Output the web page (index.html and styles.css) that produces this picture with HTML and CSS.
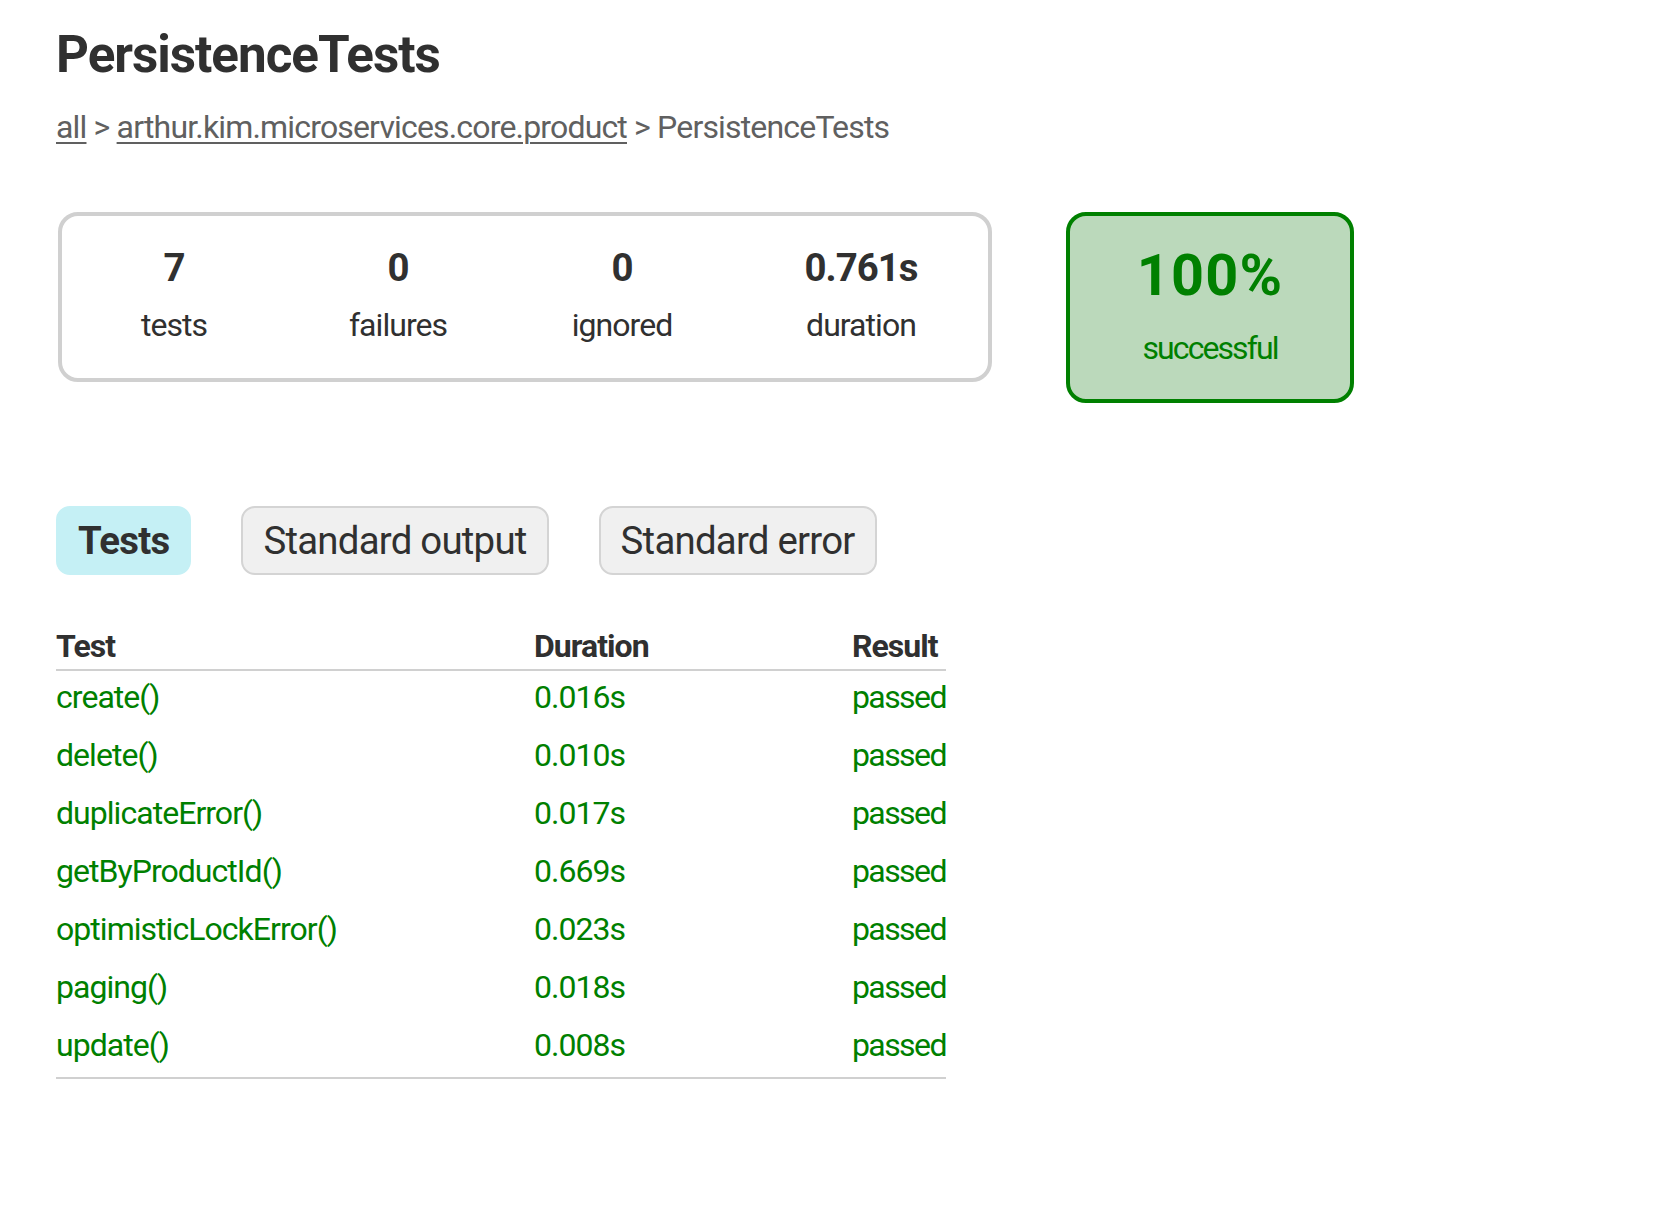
FILE: index.html
```html
<!DOCTYPE html>
<html lang="en">
<head>
<meta charset="utf-8">
<title>Test results - PersistenceTests</title>
<link rel="stylesheet" href="styles.css">
</head>
<body>
<div id="content">
  <h1>PersistenceTests</h1>
  <div class="breadcrumbs"><a href="#">all</a> &gt; <a href="#">arthur.kim.microservices.core.product</a> &gt; PersistenceTests</div>

  <div id="summary">
    <div class="summaryCell">
      <div class="summaryGroup">
        <div class="cell">
          <div class="infoBox">
            <div class="counter">7</div>
            <p>tests</p>
          </div>
        </div>
        <div class="cell">
          <div class="infoBox">
            <div class="counter">0</div>
            <p>failures</p>
          </div>
        </div>
        <div class="cell">
          <div class="infoBox">
            <div class="counter">0</div>
            <p>ignored</p>
          </div>
        </div>
        <div class="cell">
          <div class="infoBox duration">
            <div class="counter">0.761s</div>
            <p>duration</p>
          </div>
        </div>
      </div>
    </div>
    <div class="summaryCell">
      <div class="infoBox successRate">
        <div class="percent">100%</div>
        <p>successful</p>
      </div>
    </div>
  </div>

  <ul class="tabLinks">
    <li class="selected"><a href="#tab0">Tests</a></li>
    <li><a href="#tab1">Standard output</a></li>
    <li><a href="#tab2">Standard error</a></li>
  </ul>

  <table class="results">
    <thead>
      <tr>
        <th class="colTest">Test</th>
        <th class="colDuration">Duration</th>
        <th class="colResult">Result</th>
      </tr>
    </thead>
    <tbody>
      <tr><td class="success">create()</td><td class="success">0.016s</td><td class="success result">passed</td></tr>
      <tr><td class="success">delete()</td><td class="success">0.010s</td><td class="success result">passed</td></tr>
      <tr><td class="success">duplicateError()</td><td class="success">0.017s</td><td class="success result">passed</td></tr>
      <tr><td class="success">getByProductId()</td><td class="success">0.669s</td><td class="success result">passed</td></tr>
      <tr><td class="success">optimisticLockError()</td><td class="success">0.023s</td><td class="success result">passed</td></tr>
      <tr><td class="success">paging()</td><td class="success">0.018s</td><td class="success result">passed</td></tr>
      <tr><td class="success">update()</td><td class="success">0.008s</td><td class="success result">passed</td></tr>
    </tbody>
  </table>
</div>
</body>
</html>
```

FILE: styles.css
```css
html, body {
  margin: 0;
  padding: 0;
  background: #ffffff;
}

body {
  font-family: Roboto, "Noto Sans", "Liberation Sans", sans-serif;
  font-size: 32px;
  line-height: 38px;
  color: #303030;
  letter-spacing: -0.03em;
}

#content {
  padding: 25px 56px 60px 56px;
}

h1 {
  margin: 0 0 23px 0;
  font-size: 51.2px;
  line-height: 60px;
  font-weight: 700;
  letter-spacing: -0.02em;
  white-space: nowrap;
}

.breadcrumbs,
.breadcrumbs a {
  color: #606060;
}

.breadcrumbs {
  line-height: 38px;
  white-space: nowrap;
  letter-spacing: -0.026em;
}

.breadcrumbs a {
  text-decoration: underline;
  text-decoration-thickness: 2px;
  text-underline-offset: 4px;
}

/* summary */
#summary {
  margin-top: 64px;
  margin-bottom: 81px;
  display: flex;
  align-items: flex-start;
}

.summaryCell {
  padding: 2px;
}

.summaryGroup {
  display: flex;
  border: 4px solid #d0d0d0;
  border-radius: 20px;
}

.cell {
  padding: 2px;
}

.infoBox {
  width: 220px;
  padding: 28px 0 32px 0;
  text-align: center;
}

.infoBox.duration {
  width: 250px;
}

.infoBox p {
  margin: 0;
  line-height: 38px;
}

.counter {
  font-size: 38.4px;
  line-height: 44px;
  font-weight: 700;
  margin-bottom: 16px;
}

.successRate {
  width: 280px;
  margin-left: 70px;
  padding: 26px 0 32px 0;
  border: 4px solid #008000;
  border-radius: 20px;
  background-color: #bbd9bb;
  color: #008000;
}

.successRate p {
  letter-spacing: -0.06em;
}

.percent {
  font-size: 57.6px;
  line-height: 68px;
  font-weight: 700;
  letter-spacing: 0.02em;
  margin-bottom: 19px;
}

/* tabs */
ul.tabLinks {
  display: flex;
  margin: 0 0 32px 0;
  padding: 20px 0;
  list-style: none;
}

ul.tabLinks li {
  padding: 10px 20px;
  margin-right: 50px;
  border: 2px solid #d4d4d4;
  border-radius: 14px;
  background-color: #f0f0f0;
}

ul.tabLinks li.selected {
  background-color: #c5f0f5;
  border-color: #c5f0f5;
}

ul.tabLinks a {
  display: block;
  font-size: 38.4px;
  line-height: 45px;
  letter-spacing: -0.02em;
  color: #303030;
  text-decoration: none;
  white-space: nowrap;
}

ul.tabLinks li.selected a {
  font-weight: 700;
}

/* results table */
table.results {
  border-collapse: collapse;
  border-bottom: 2px solid #d0d0d0;
}

table.results th {
  text-align: left;
  font-weight: 700;
  white-space: nowrap;
  padding: 0 0 4px 192px;
  border-bottom: 2px solid #d0d0d0;
  line-height: 38px;
}

table.results td {
  white-space: nowrap;
  padding: 7px 0 13px 192px;
  line-height: 38px;
}

table.results th:first-child,
table.results td:first-child {
  padding-left: 0;
}

table.results td.result {
  letter-spacing: -0.05em;
}

th.colTest {
  width: 286px;
}

th.colDuration {
  width: 126px;
}

th.colResult {
  width: 93px;
}

.success {
  color: #008000;
}
```
